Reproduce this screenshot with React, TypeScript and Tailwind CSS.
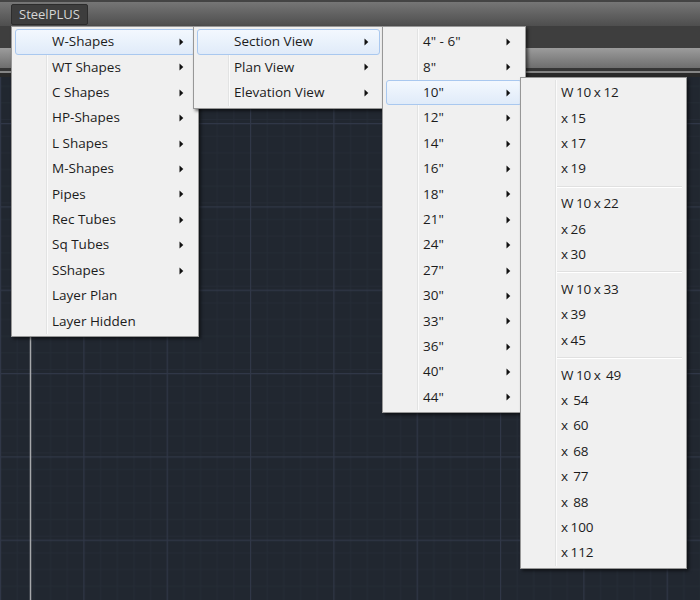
import React from "react";

type Entry = { label?: string; arrow?: boolean; hl?: boolean; sep?: boolean };

function Arrow() {
  return (
    <svg width="5" height="8" viewBox="0 0 5 8" className="block">
      <path d="M0.5 0.5 L4.3 4 L0.5 7.5 Z" fill="#111" />
    </svg>
  );
}

function Menu({
  entries,
  className,
  tight,
}: {
  entries: Entry[];
  className: string;
  tight?: boolean;
}) {
  return (
    <div
      className={
        "absolute border border-[#979797] bg-[#f0f0f0] px-[3px] py-[2.3px] shadow-[2px_2px_3px_rgba(0,0,0,0.55)] " +
        className
      }
    >
      <div className="absolute top-[2px] bottom-[2px] left-[34px] w-[2px] border-l border-[#e2e3e3] bg-white/70" />
      {entries.map((e, i) =>
        e.sep ? (
          <div key={i} className="relative flex h-[9.5px] items-center pl-[33px] pr-[1px]">
            <div className="h-[2px] w-full border-t border-[#e0e0e0] bg-white" />
          </div>
        ) : (
          <div
            key={i}
            className={
              e.hl
                ? "relative flex h-[25.4px] items-center justify-between rounded-[3px] border border-[#a9c8ef] bg-gradient-to-b from-[#f3f8fe] to-[#e0ebf9] pl-[36px] pr-[10px]"
                : "relative flex h-[25.4px] items-center justify-between border border-transparent pl-[36px] pr-[10px]"
            }
          >
            <span
              className={
                tight
                  ? "whitespace-pre text-[13.5px] leading-none tracking-[-0.1px] text-[#1c1c1c] [word-spacing:-0.8px]"
                  : "whitespace-pre text-[13.5px] leading-none text-[#1c1c1c]"
              }
            >
              {e.label}
            </span>
            {e.arrow ? <Arrow /> : null}
          </div>
        )
      )}
    </div>
  );
}

function Grid() {
  return (
    <svg className="absolute inset-0 h-full w-full" width="700" height="523">
      <defs>
        <pattern id="minor" width="16.667" height="16.667" patternUnits="userSpaceOnUse" y="46">
          <path d="M0 0.5 H16.667 M0.5 0 V16.667" stroke="#252c36" strokeWidth="1" fill="none" />
        </pattern>
        <pattern id="major" width="83.333" height="83.333" patternUnits="userSpaceOnUse" y="46">
          <rect width="83.333" height="83.333" fill="url(#minor)" />
          <path d="M0 0.5 H83.333 M0.5 0 V83.333" stroke="#303747" strokeWidth="1.3" fill="none" />
        </pattern>
      </defs>
      <rect width="700" height="523" fill="#212730" />
      <rect width="700" height="523" fill="url(#major)" />
      <line x1="30.5" y1="0" x2="30.5" y2="523" stroke="#a6a8ab" strokeWidth="1.5" />
    </svg>
  );
}

export default function App() {
  const m1: Entry[] = [
    { label: "W-Shapes", arrow: true, hl: true },
    { label: "WT Shapes", arrow: true },
    { label: "C Shapes", arrow: true },
    { label: "HP-Shapes", arrow: true },
    { label: "L Shapes", arrow: true },
    { label: "M-Shapes", arrow: true },
    { label: "Pipes", arrow: true },
    { label: "Rec Tubes", arrow: true },
    { label: "Sq Tubes", arrow: true },
    { label: "SShapes", arrow: true },
    { label: "Layer Plan" },
    { label: "Layer Hidden" },
  ];
  const m2: Entry[] = [
    { label: "Section View", arrow: true, hl: true },
    { label: "Plan View", arrow: true },
    { label: "Elevation View", arrow: true },
  ];
  const m3: Entry[] = [
    "4\" - 6\"",
    "8\"",
    "10\"",
    "12\"",
    "14\"",
    "16\"",
    "18\"",
    "21\"",
    "24\"",
    "27\"",
    "30\"",
    "33\"",
    "36\"",
    "40\"",
    "44\"",
  ].map((l, i) => ({ label: l, arrow: true, hl: i === 2 }));
  const m4: Entry[] = [
    { label: "W 10 x 12" },
    { label: "x 15" },
    { label: "x 17" },
    { label: "x 19" },
    { sep: true },
    { label: "W 10 x 22" },
    { label: "x 26" },
    { label: "x 30" },
    { sep: true },
    { label: "W 10 x 33" },
    { label: "x 39" },
    { label: "x 45" },
    { sep: true },
    { label: "W 10 x  49" },
    { label: "x  54" },
    { label: "x  60" },
    { label: "x  68" },
    { label: "x  77" },
    { label: "x  88" },
    { label: "x 100" },
    { label: "x 112" },
  ];

  return (
    <div className="relative flex h-[600px] w-[700px] flex-col overflow-hidden bg-[#212730] font-['Open_Sans','Noto_Sans',sans-serif]">
      <div className="flex h-[26px] items-center border-t-2 border-[#444] bg-gradient-to-b from-[#767676] to-[#4e4e4e] pl-[11px]">
        <div className="flex h-[21px] items-center rounded-[2px] border border-[#2c2c2c] bg-[#3d3d3d] px-[7px] text-[13px] leading-none text-[#d6d6d6]">
          SteelPLUS
        </div>
      </div>
      <div className="h-[22px] bg-[#3e3e3e]" />
      <div className="h-[20px] bg-gradient-to-b from-[#9c9c9c] to-[#6e6e6e]" />
      <div className="h-[3px] bg-[#353535]" />
      <div className="h-[2px] bg-[#858585]" />
      <div className="h-[4px] bg-[#292929]" />
      <div className="relative flex-1">
        <Grid />
      </div>

      <Menu entries={m1} className="left-[11px] top-[26px] w-[188px]" />
      <Menu entries={m2} className="left-[193px] top-[26px] w-[191px]" />
      <Menu entries={m3} className="left-[382px] top-[26px] w-[144px]" />
      <Menu entries={m4} className="left-[520px] top-[77px] w-[167px]" tight />
    </div>
  );
}
